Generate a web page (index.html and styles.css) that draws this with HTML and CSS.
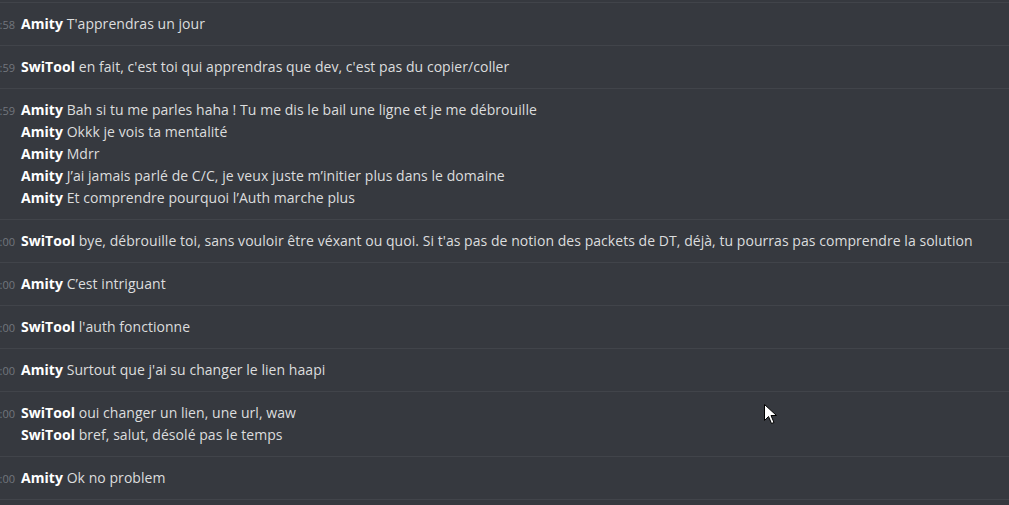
FILE: index.html
```html
<!DOCTYPE html>
<html lang="fr">
<head>
<meta charset="utf-8">
<link rel="stylesheet" href="styles.css">
</head>
<body>
<div class="chat">
  <div class="group">
    <div class="line"><span class="time">17:58</span><span class="msg"><b class="user">Amity</b> T'apprendras un jour</span></div>
  </div>
  <div class="group">
    <div class="line"><span class="time">17:59</span><span class="msg"><b class="user">SwiTool</b> en fait, c'est toi qui apprendras que dev, c'est pas du copier/coller</span></div>
  </div>
  <div class="group">
    <div class="line"><span class="time">17:59</span><span class="msg"><b class="user">Amity</b> Bah si tu me parles haha ! Tu me dis le bail une ligne et je me débrouille</span></div>
    <div class="line"><span class="time"></span><span class="msg"><b class="user">Amity</b> Okkk je vois ta mentalité</span></div>
    <div class="line"><span class="time"></span><span class="msg"><b class="user">Amity</b> Mdrr</span></div>
    <div class="line"><span class="time"></span><span class="msg"><b class="user">Amity</b> J’ai jamais parlé de C/C, je veux juste m’initier plus dans le domaine</span></div>
    <div class="line"><span class="time"></span><span class="msg"><b class="user">Amity</b> Et comprendre pourquoi l’Auth marche plus</span></div>
  </div>
  <div class="group">
    <div class="line"><span class="time">18:00</span><span class="msg"><b class="user">SwiTool</b> bye, débrouille toi, sans vouloir être véxant ou quoi. Si t'as pas de notion des packets de DT, déjà, tu pourras pas comprendre la solution</span></div>
  </div>
  <div class="group">
    <div class="line"><span class="time">18:00</span><span class="msg"><b class="user">Amity</b> C’est intriguant</span></div>
  </div>
  <div class="group">
    <div class="line"><span class="time">18:00</span><span class="msg"><b class="user">SwiTool</b> l'auth fonctionne</span></div>
  </div>
  <div class="group">
    <div class="line"><span class="time">18:00</span><span class="msg"><b class="user">Amity</b> Surtout que j'ai su changer le lien haapi</span></div>
  </div>
  <div class="group">
    <div class="line"><span class="time">18:00</span><span class="msg"><b class="user">SwiTool</b> oui changer un lien, une url, waw</span></div>
    <div class="line"><span class="time"></span><span class="msg"><b class="user">SwiTool</b> bref, salut, désolé pas le temps</span></div>
  </div>
  <div class="group">
    <div class="line"><span class="time">18:00</span><span class="msg"><b class="user">Amity</b> Ok no problem</span></div>
  </div>
  <div class="tail"></div>
</div>
<svg class="cursor" width="13" height="21" viewBox="0 0 13 21" aria-hidden="true">
  <path d="M0.5 0.5 L0.5 16.5 L4.5 12.5 L7.5 19.5 L10 18.5 L7 11.5 L12.5 11.5 Z" fill="#fff" stroke="#000" stroke-width="1"/>
</svg>
</body>
</html>
```
FILE: styles.css
```css
html, body {
  margin: 0;
  padding: 0;
  background: #36393f;
  width: 1009px;
  height: 505px;
  overflow: hidden;
}
.chat {
  padding-top: 2px;
  font-family: "Open Sans", "Noto Sans", sans-serif;
  font-size: 14px;
  letter-spacing: 0.05px;
  color: #dcddde;
}
.group {
  border-top: 1px solid #41444a;
  padding: 10px 0;
}
.tail {
  border-top: 1px solid #41444a;
  height: 4px;
}
.line {
  display: flex;
  align-items: baseline;
  height: 22px;
  line-height: 22px;
  white-space: nowrap;
}
.time {
  flex: none;
  width: 28px;
  margin-left: -13px;
  margin-right: 6px;
  text-align: right;
  font-size: 11px;
  letter-spacing: 0;
  color: #72767d;
}
.user {
  color: #ffffff;
  font-weight: 700;
}
.cursor {
  position: absolute;
  left: 764px;
  top: 404px;
}
```
